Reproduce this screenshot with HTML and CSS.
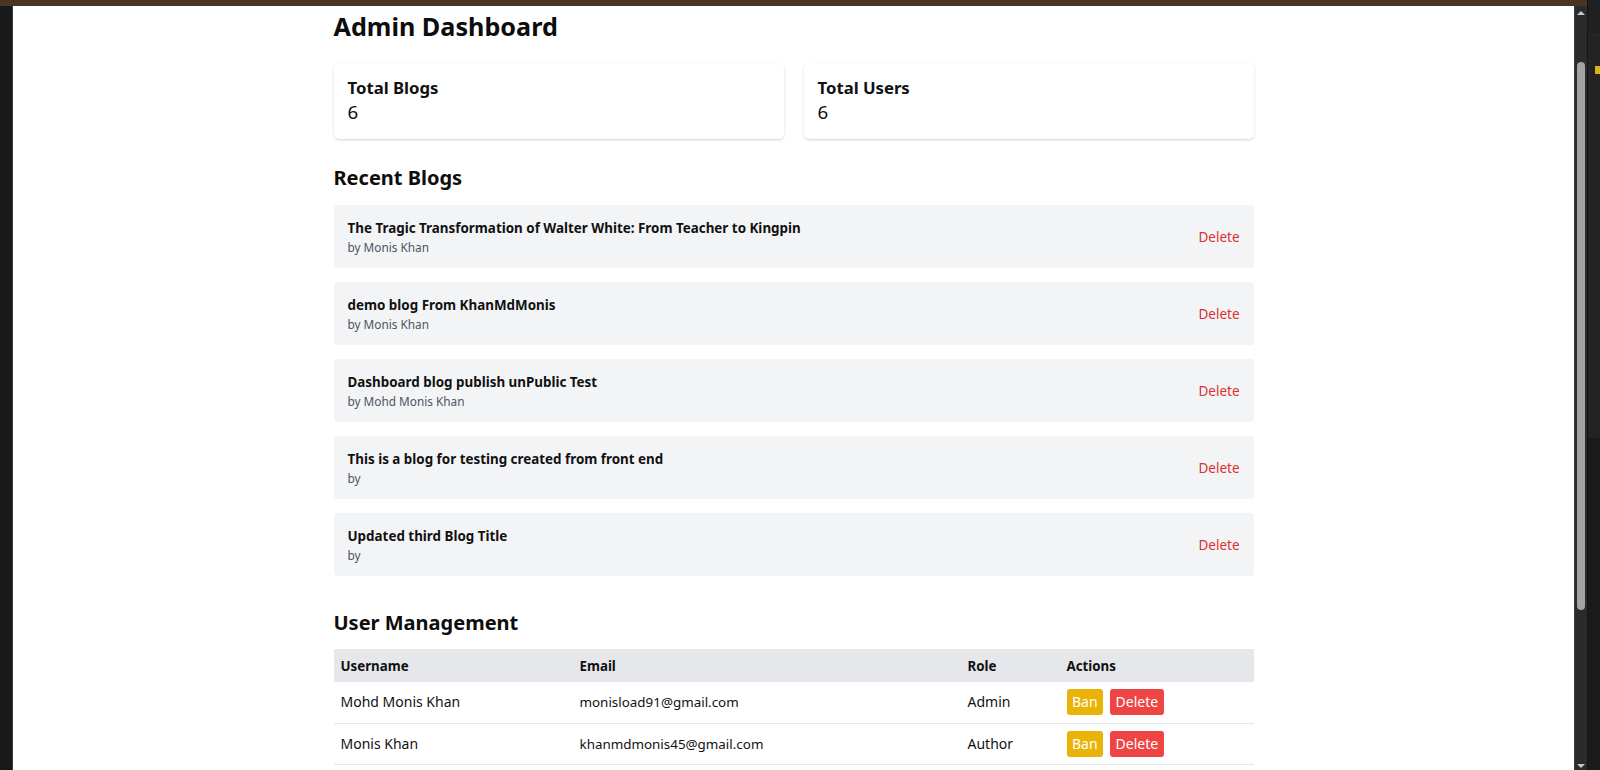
FILE: index.html
```html
<!DOCTYPE html>
<html lang="en">
<head>
<meta charset="utf-8">
<title>Admin Dashboard</title>
<link rel="stylesheet" href="styles.css">
</head>
<body>
<div class="window">
  <div class="main-col">
    <div class="topbar"></div>
    <div class="body-row">
      <div class="left-strip"></div>
      <div class="viewport">
        <div class="page">
          <h1 class="page-title">Admin Dashboard</h1>

          <div class="stats">
            <div class="stat-card">
              <div class="stat-label">Total Blogs</div>
              <div class="stat-value">6</div>
            </div>
            <div class="stat-card">
              <div class="stat-label">Total Users</div>
              <div class="stat-value">6</div>
            </div>
          </div>

          <h2 class="section-title blogs-title">Recent Blogs</h2>
          <div class="blog-list">
            <div class="blog-item">
              <div class="blog-info">
                <div class="blog-title">The Tragic Transformation of Walter White: From Teacher to Kingpin</div>
                <div class="blog-author">by Monis Khan</div>
              </div>
              <a class="blog-delete" href="#">Delete</a>
            </div>
            <div class="blog-item">
              <div class="blog-info">
                <div class="blog-title">demo blog From KhanMdMonis</div>
                <div class="blog-author">by Monis Khan</div>
              </div>
              <a class="blog-delete" href="#">Delete</a>
            </div>
            <div class="blog-item">
              <div class="blog-info">
                <div class="blog-title">Dashboard blog publish unPublic Test</div>
                <div class="blog-author">by Mohd Monis Khan</div>
              </div>
              <a class="blog-delete" href="#">Delete</a>
            </div>
            <div class="blog-item">
              <div class="blog-info">
                <div class="blog-title">This is a blog for testing created from front end</div>
                <div class="blog-author">by</div>
              </div>
              <a class="blog-delete" href="#">Delete</a>
            </div>
            <div class="blog-item">
              <div class="blog-info">
                <div class="blog-title">Updated third Blog Title</div>
                <div class="blog-author">by</div>
              </div>
              <a class="blog-delete" href="#">Delete</a>
            </div>
          </div>

          <h2 class="section-title users-title">User Management</h2>
          <table class="user-table">
            <colgroup>
              <col class="col-name">
              <col class="col-email">
              <col class="col-role">
              <col class="col-actions">
            </colgroup>
            <thead>
              <tr>
                <th>Username</th>
                <th>Email</th>
                <th>Role</th>
                <th>Actions</th>
              </tr>
            </thead>
            <tbody>
              <tr>
                <td>Mohd Monis Khan</td>
                <td class="email">monisload91@gmail.com</td>
                <td>Admin</td>
                <td><span class="actions"><button class="btn btn-ban">Ban</button><button class="btn btn-del">Delete</button></span></td>
              </tr>
              <tr>
                <td>Monis Khan</td>
                <td class="email">khanmdmonis45@gmail.com</td>
                <td>Author</td>
                <td><span class="actions"><button class="btn btn-ban">Ban</button><button class="btn btn-del">Delete</button></span></td>
              </tr>
            </tbody>
          </table>
        </div>
      </div>
      <div class="scrollbar">
        <span class="arrow arrow-up"></span>
        <span class="thumb"></span>
        <span class="track-rest"></span>
        <span class="arrow arrow-down"></span>
      </div>
    </div>
  </div>
  <div class="right-panel">
    <div class="rp-top"></div>
    <div class="rp-mid"><span class="rp-mark"></span></div>
    <div class="rp-bottom"></div>
  </div>
</div>
</body>
</html>
```

FILE: styles.css
```css
* { box-sizing: border-box; }

html, body {
  margin: 0;
  padding: 0;
  width: 1600px;
  height: 770px;
  overflow: hidden;
  background: #1a1a1a;
  font-family: "Noto Sans", "DejaVu Sans", sans-serif;
}

.window {
  display: flex;
  width: 1600px;
  height: 770px;
}

.main-col {
  width: 1587px;
  display: flex;
  flex-direction: column;
}

.topbar {
  height: 6px;
  background: #4a3424;
  flex: none;
}

.body-row {
  flex: 1;
  display: flex;
  min-height: 0;
}

.left-strip {
  width: 13px;
  background: #191919;
  border-right: 1px solid #3a3a3a;
  flex: none;
}

.viewport {
  flex: 1;
  background: #ffffff;
  overflow: hidden;
}

.page {
  width: 920px;
  margin: 0 auto;
  padding-top: 4px;
  color: #111111;
}

.page-title {
  margin: 0;
  font-size: 25.2px;
  line-height: 32px;
  font-weight: 700;
  color: #0d0d0d;
}

.stats {
  display: grid;
  grid-template-columns: 1fr 1fr;
  gap: 20px;
  margin-top: 21px;
}

.stat-card {
  background: #ffffff;
  border-radius: 5px;
  padding: 14px 14px;
  box-shadow: 0 1px 3px rgba(0, 0, 0, 0.12), 0 1px 2px rgba(0, 0, 0, 0.06);
  height: 76px;
}

.stat-label {
  font-size: 16.7px;
  line-height: 21px;
  font-weight: 700;
  color: #111111;
}

.stat-value {
  font-size: 18.7px;
  line-height: 27px;
  color: #111111;
}

.section-title {
  margin: 0;
  font-size: 20px;
  line-height: 28px;
  font-weight: 700;
  color: #0d0d0d;
}

.blogs-title {
  margin-top: 25px;
}

.blog-list {
  display: flex;
  flex-direction: column;
  gap: 14px;
  margin-top: 13px;
}

.blog-item {
  display: flex;
  align-items: center;
  justify-content: space-between;
  background: #f3f4f6;
  border-radius: 4px;
  padding: 12px 14px;
  height: 63px;
}

.blog-title {
  font-size: 13.4px;
  line-height: 20px;
  font-weight: 700;
  color: #111111;
}

.blog-author {
  font-size: 11.8px;
  line-height: 18px;
  color: #4b5563;
}

.blog-delete {
  font-size: 13.5px;
  color: #dc2f2f;
  text-decoration: none;
}

.users-title {
  margin-top: 33px;
}

.user-table {
  width: 920px;
  margin-top: 12px;
  border-collapse: collapse;
  font-size: 14px;
  color: #111111;
}

.col-name { width: 239px; }
.col-email { width: 388px; }
.col-role { width: 99px; }
.col-actions { width: 194px; }

.user-table thead tr {
  background: #e5e7eb;
}

.user-table th {
  text-align: left;
  font-size: 13.3px;
  font-weight: 700;
  padding: 6px 7px;
  line-height: 20px;
  height: 33px;
}

.user-table td {
  padding: 7px 7px;
  line-height: 20px;
  height: 41px;
  border-bottom: 1px solid #e5e7eb;
}

.user-table td.email {
  font-size: 13.4px;
}

.actions {
  display: flex;
  gap: 7px;
}

.btn {
  font-family: "Noto Sans", "DejaVu Sans", sans-serif;
  font-size: 14px;
  line-height: 20px;
  color: #ffffff;
  border: none;
  border-radius: 3px;
  padding: 3px 5.5px;
  height: 26px;
}

.btn-ban { background: #eab308; }
.btn-del { background: #ef4444; }

.scrollbar {
  width: 13px;
  flex: none;
  background: #2b2b2b;
  border-left: 1px solid #3c3c3c;
  display: flex;
  flex-direction: column;
  align-items: center;
}

.arrow {
  width: 0;
  height: 0;
  border-left: 4px solid transparent;
  border-right: 4px solid transparent;
  flex: none;
}

.arrow-up {
  margin-top: 5px;
  border-bottom: 4px solid #c8c8c8;
}

.arrow-down {
  margin-bottom: 2px;
  border-top: 4px solid #c8c8c8;
}

.thumb {
  width: 8px;
  height: 548px;
  margin-top: 47px;
  background: #a3a3a3;
  border-radius: 4px;
  flex: none;
}

.track-rest {
  flex: 1;
}

.right-panel {
  width: 13px;
  display: flex;
  flex-direction: column;
  background: #1b1b1b;
  border-left: 1px solid #141414;
}

.rp-top {
  height: 35px;
  background: #202020;
  border-bottom: 1px solid #2a2a2a;
}

.rp-mid {
  height: 403px;
  background: #232323;
  padding-top: 31px;
  display: flex;
  justify-content: flex-end;
  align-items: flex-start;
}

.rp-mark {
  width: 5px;
  height: 8px;
  background: #d9b518;
}

.rp-bottom {
  flex: 1;
  background: #1a1a1a;
}
```
